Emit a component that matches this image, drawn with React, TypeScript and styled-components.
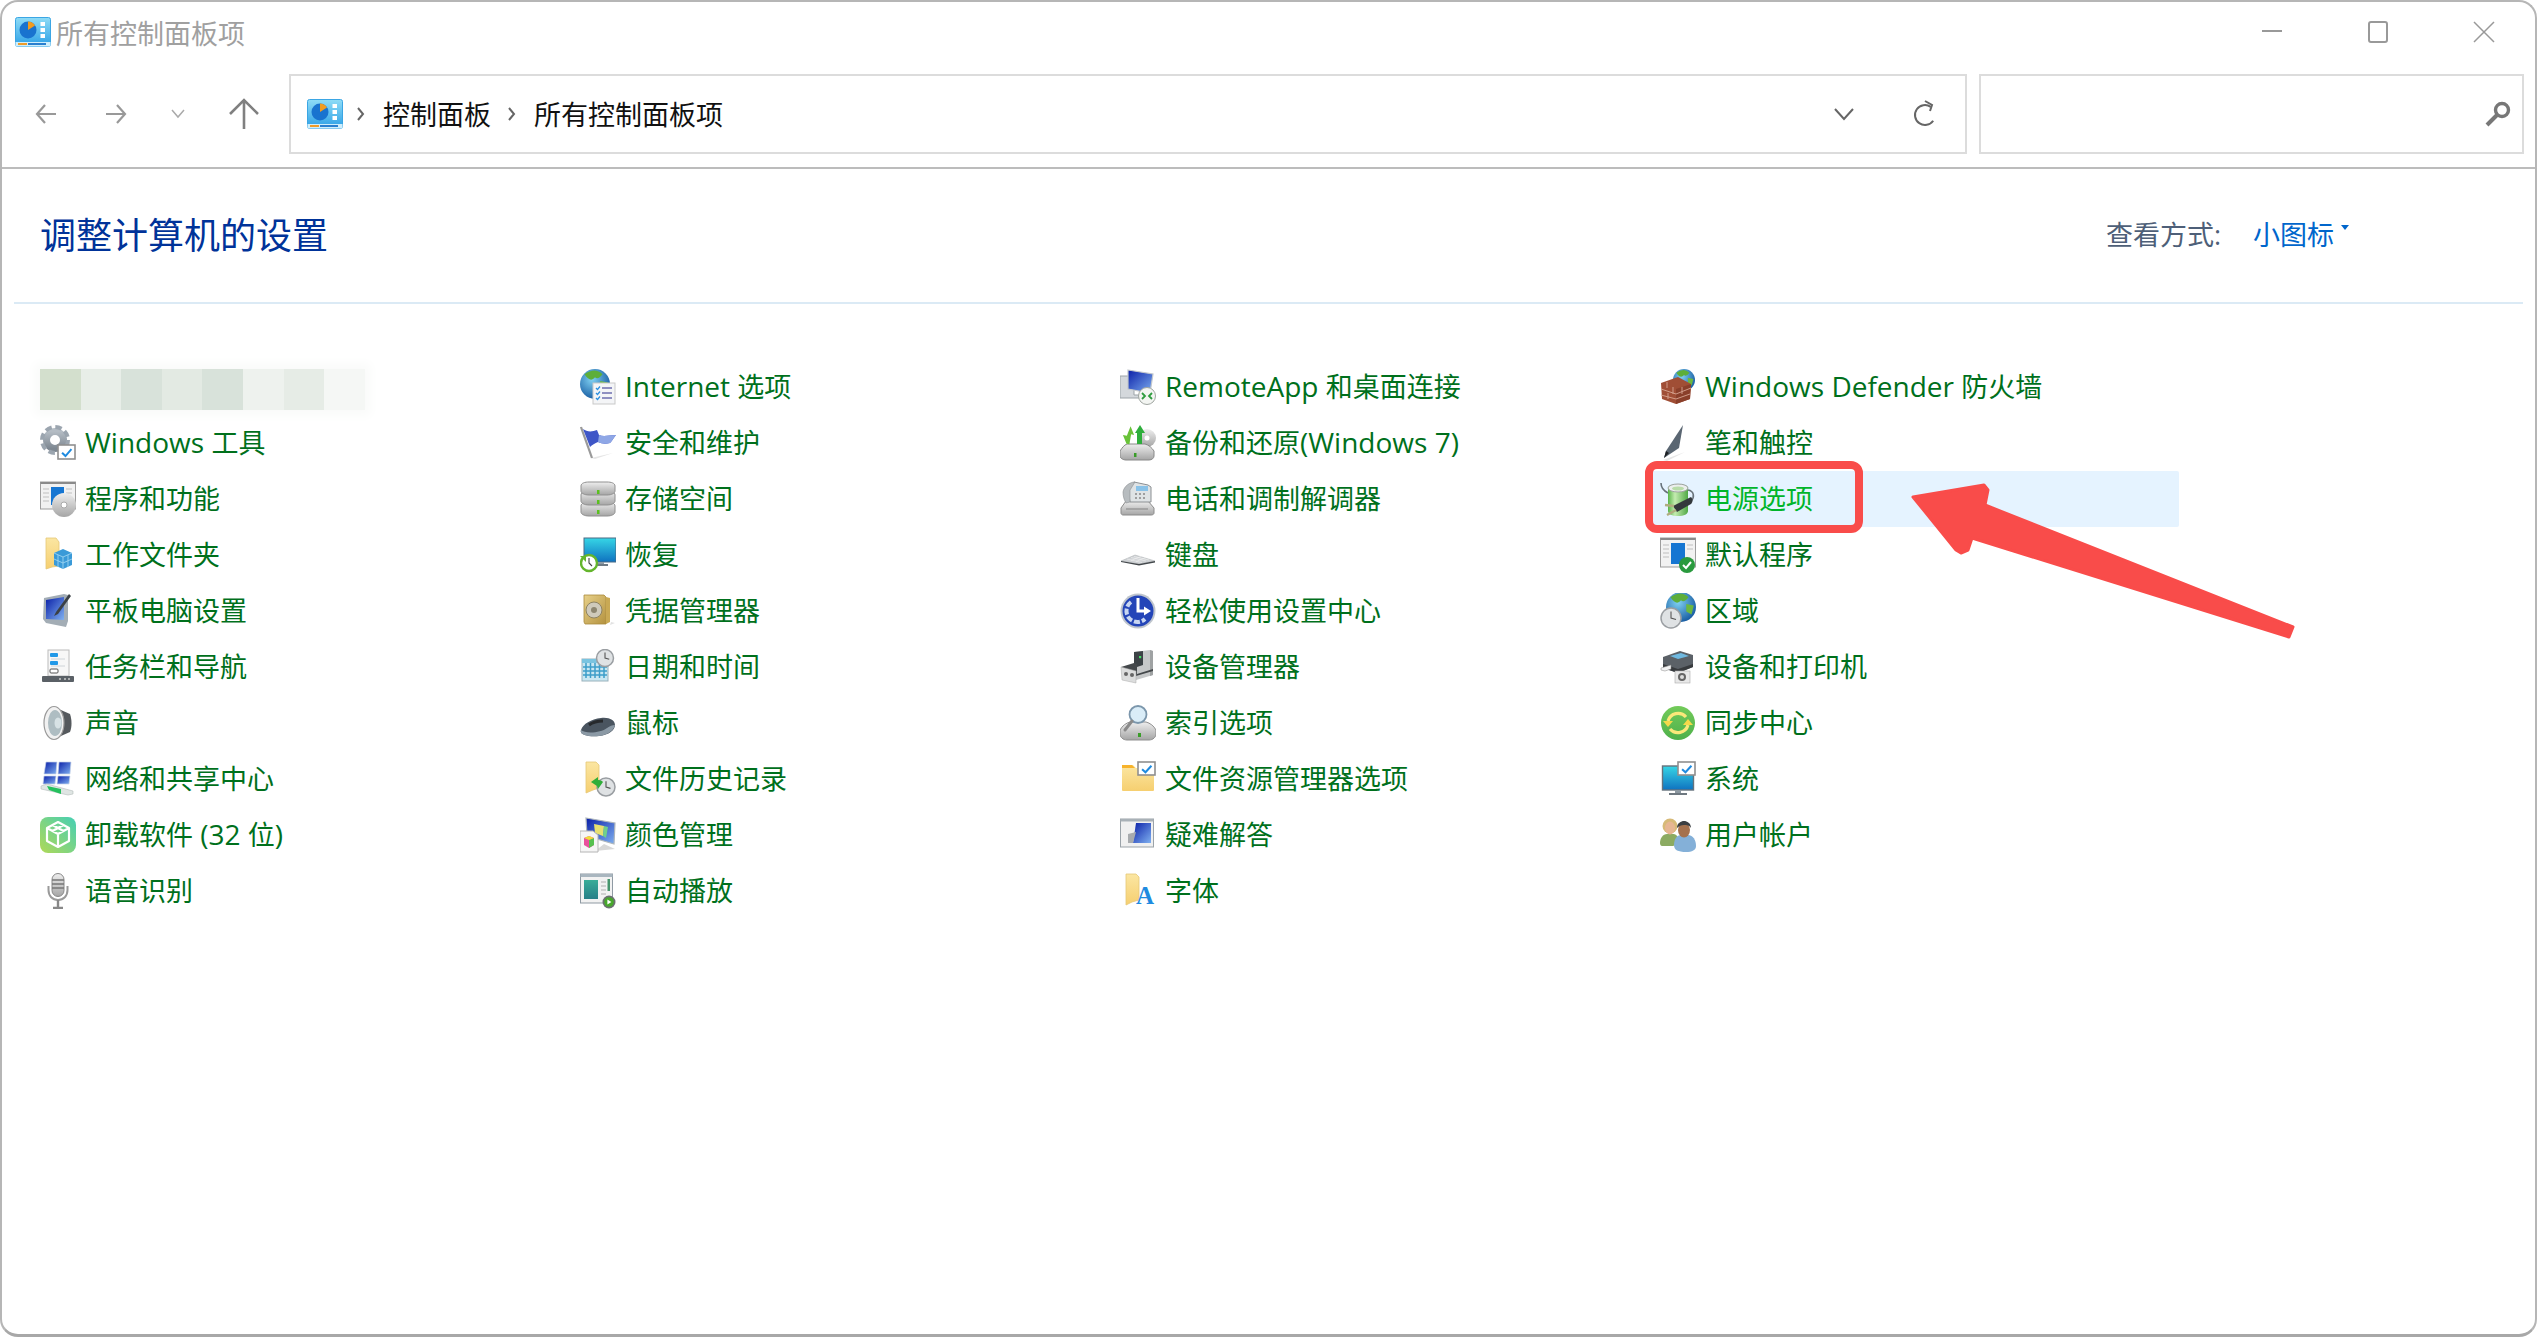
import React from 'react';
import styled, { createGlobalStyle } from 'styled-components';

const FONT = `"Open Sans", "Noto Sans CJK SC", sans-serif`;

const GlobalStyle = createGlobalStyle`
  html, body {
    margin: 0;
    padding: 0;
    background: #fff;
  }
  body {
    font-family: ${FONT};
  }
`;

const Window = styled.div`
  position: relative;
  box-sizing: border-box;
  width: 2537px;
  height: 1337px;
  display: flex;
  flex-direction: column;
  overflow: hidden;
  background: #fff;
  border: 2px solid #b6b6b6;
  border-bottom: 3px solid #a8a8a8;
  border-radius: 18px;
`;

const EdgeMark = styled.div`
  position: absolute;
  left: -2px;
  top: ${({ $top }) => $top}px;
  width: 2px;
  height: ${({ $h }) => $h}px;
  background: #3a3a3a;
`;

const TitleBar = styled.div`
  height: 72px;
  display: flex;
  align-items: center;
  padding: 0 0 12px 13px;
  box-sizing: border-box;
`;

const TitleText = styled.span`
  margin-left: 5px;
  font-size: 27px;
  color: #a0a0a0;
  flex: 1;
`;

const WinButton = styled.div`
  width: 106px;
  display: flex;
  justify-content: center;
  margin-right: ${({ $end }) => ($end ? '-2px' : '0')};
`;

const Toolbar = styled.div`
  height: 95px;
  box-sizing: border-box;
  display: flex;
  align-items: flex-start;
  padding: 0 11px 0 0;
  border-bottom: 2px solid #bcbcbc;
`;

const NavGroup = styled.div`
  width: 287px;
  height: 80px;
  display: flex;
  align-items: center;
`;

const NavButton = styled.div`
  width: ${({ $w }) => $w}px;
  margin-left: ${({ $ml }) => $ml}px;
  display: flex;
  justify-content: center;
`;

const AddressBar = styled.div`
  width: 1678px;
  height: 80px;
  box-sizing: border-box;
  display: flex;
  align-items: center;
  padding: 0 27px 0 16px;
  border: 2px solid #dcdcdc;
  font-size: 27px;
  color: #111;
`;

const Crumb = styled.span`
  margin-left: ${({ $ml }) => $ml}px;
  padding-bottom: 1px;
`;

const Spring = styled.div`
  flex: 1;
`;

const SearchBox = styled.div`
  width: 545px;
  height: 80px;
  margin-left: 12px;
  box-sizing: border-box;
  display: flex;
  align-items: center;
  justify-content: flex-end;
  padding-right: 11px;
  border: 2px solid #dcdcdc;
`;

const Heading = styled.div`
  height: 135px;
  margin: 0 12px;
  padding: 0 26px;
  box-sizing: border-box;
  display: flex;
  align-items: center;
  justify-content: space-between;
  border-bottom: 2px solid #dbeaf5;
`;

const PageTitle = styled.h1`
  margin: 0;
  padding-bottom: 4px;
  font-size: 36px;
  font-weight: 400;
  color: #003399;
`;

const ViewMode = styled.div`
  display: flex;
  align-items: center;
  padding-bottom: 4px;
  font-size: 27px;
  color: #4e5f78;
  margin-right: 148px;
`;

const ViewLink = styled.span`
  margin-left: 32px;
  color: #0066cc;
`;

const Caret = styled.i`
  width: 0;
  height: 0;
  margin: -8px 0 0 7px;
  border: 4px solid transparent;
  border-top: 5px solid #0066cc;
`;

const Grid = styled.div`
  margin-top: 55px;
  margin-left: 29px;
  display: grid;
  grid-auto-flow: column;
  grid-template-rows: repeat(10, 56px);
  grid-template-columns: repeat(4, 540px);
`;

const Row = styled.div`
  position: relative;
  width: 528px;
  height: 56px;
  box-sizing: border-box;
  display: flex;
  align-items: center;
  gap: 9px;
  padding-left: 9px;
  font-size: 27px;
  white-space: nowrap;
  color: ${({ $active }) => ($active ? '#00b52a' : '#00701c')};
  background: ${({ $active }) => ($active ? '#e5f3ff' : 'transparent')};
  border-radius: 2px;
`;

const RowLabel = styled.span`
  padding-bottom: 3px;
`;

const Latin = styled.span`
  font-size: 28px;
`;

const Icon = styled.svg`
  flex: none;
  display: block;
  width: ${({ $w }) => $w || 36}px;
  height: ${({ $h }) => $h || 36}px;
  margin-left: ${({ $ml }) => $ml || 0}px;
`;

const HiddenDefs = styled.svg`
  position: absolute;
  width: 0;
  height: 0;
`;

const BlurredBar = styled.div`
  display: flex;
  justify-self: start;
  margin: 10px 0 5px 9px;
  box-shadow: 0 0 10px 6px #fafbfa;
`;

const BlurBlock = styled.div`
  width: 40.6px;
  height: 41px;
  background: ${({ $c }) => $c};
`;

const RedBox = styled.div`
  position: absolute;
  left: -6px;
  top: -10px;
  width: 218px;
  height: 72px;
  box-sizing: border-box;
  border: 8px solid #f94c4a;
  border-radius: 12px;
`;

const Arrow = styled.svg`
  position: absolute;
  left: 1896px;
  top: 468px;
  width: 410px;
  height: 180px;
`;

const Defs = () => (
  <HiddenDefs>
    <defs>
      <linearGradient id="sky" x1="0" y1="0" x2="0" y2="1">
        <stop offset="0" stopColor="#36d6e6" />
        <stop offset="1" stopColor="#0f72c0" />
      </linearGradient>
      <linearGradient id="panel" x1="0" y1="0" x2="0" y2="1">
        <stop offset="0" stopColor="#8fdcf6" />
        <stop offset="1" stopColor="#2b9fe6" />
      </linearGradient>
      <linearGradient id="grey" x1="0" y1="0" x2="0" y2="1">
        <stop offset="0" stopColor="#b4bcc4" />
        <stop offset="1" stopColor="#7e8892" />
      </linearGradient>
      <linearGradient id="silver" x1="0" y1="0" x2="0" y2="1">
        <stop offset="0" stopColor="#eeeeee" />
        <stop offset="1" stopColor="#a5a5a5" />
      </linearGradient>
      <linearGradient id="folder" x1="0" y1="0" x2="0" y2="1">
        <stop offset="0" stopColor="#fbe6a2" />
        <stop offset="1" stopColor="#f6cf70" />
      </linearGradient>
      <linearGradient id="royal" x1="0" y1="0" x2="1" y2="1">
        <stop offset="0" stopColor="#0a1fa8" />
        <stop offset="1" stopColor="#7fb0f0" />
      </linearGradient>
      <linearGradient id="mint" x1="1" y1="0" x2="0" y2="1">
        <stop offset="0" stopColor="#45cfb4" />
        <stop offset="1" stopColor="#b0d957" />
      </linearGradient>
      <linearGradient id="gold" x1="0" y1="0" x2="1" y2="1">
        <stop offset="0" stopColor="#e8d18a" />
        <stop offset="1" stopColor="#b4923f" />
      </linearGradient>
      <linearGradient id="grass" x1="0" y1="0" x2="0" y2="1">
        <stop offset="0" stopColor="#73cb5a" />
        <stop offset="1" stopColor="#4eb04a" />
      </linearGradient>
      <linearGradient id="battery" x1="0" y1="0" x2="1" y2="0">
        <stop offset="0" stopColor="#58b548" />
        <stop offset="0.35" stopColor="#c4ecb0" />
        <stop offset="1" stopColor="#4fa845" />
      </linearGradient>
      <radialGradient id="earth" cx="0.4" cy="0.35" r="0.7">
        <stop offset="0" stopColor="#7fd0f2" />
        <stop offset="1" stopColor="#14589f" />
      </radialGradient>
    </defs>
  </HiddenDefs>
);

const Globe = ({ cx, cy, r }: { cx: number; cy: number; r: number }) => (
  <g>
    <circle cx={cx} cy={cy} r={r} fill="url(#earth)" />
    <path
      d={`M${cx - r * 0.7} ${cy - r * 0.65}q${r * 0.7} -${r * 0.5} ${r * 1.2} 0q-${r * 0.3} ${r * 0.4} -${r * 0.5} ${r * 0.2}q-${r * 0.3} ${r * 0.4} -${r * 0.7} -${r * 0.2}z`}
      fill="#5dae3a"
    />
    <path d={`M${cx + r * 0.35} ${cy - r * 0.2}l${r * 0.5} ${r * 0.1}l-${r * 0.15} ${r * 0.6}l-${r * 0.35} -${r * 0.2}z`} fill="#6cb83f" />
  </g>
);

const Clock = ({ cx, cy, r }: { cx: number; cy: number; r: number }) => (
  <g>
    <circle cx={cx} cy={cy} r={r} fill="#dfe2e4" stroke="#9a9ea2" strokeWidth="1.5" />
    <path d={`M${cx} ${cy - r * 0.65}V${cy}L${cx + r * 0.5} ${cy + r * 0.15}`} fill="none" stroke="#555" strokeWidth="1.1" />
  </g>
);

const CheckBox = ({ x, y, w, h }: { x: number; y: number; w: number; h: number }) => (
  <g>
    <rect x={x} y={y} width={w} height={h} fill="#fff" stroke="#8f8f8f" strokeWidth="1.6" />
    <path
      d={`M${x + w * 0.24} ${y + h * 0.55}l${w * 0.2} ${h * 0.24}l${w * 0.35} -${h * 0.5}`}
      fill="none"
      stroke="#1f8be0"
      strokeWidth="2"
    />
  </g>
);

const PanelIcon = () => (
  <Icon $w={36} $h={30} viewBox="0 0 36 30">
    <rect x="0.5" y="0.5" width="35" height="29" rx="2" fill="url(#panel)" stroke="#3ba6e4" />
    <rect x="0.5" y="25" width="35" height="4.5" fill="#cfeefb" />
    <circle cx="13" cy="13" r="8.5" fill="#1973cf" />
    <path d="M13 13V4.5a8.5 8.5 0 0 1 7 4z" fill="#f29c1f" />
    <path d="M3 27h9" stroke="#ef9c2a" strokeWidth="2" />
    <path d="M13 27h18" stroke="#2a7fcf" strokeWidth="2" />
    <rect x="25.5" y="5" width="4.5" height="4" fill="#fff" />
    <rect x="25.5" y="11" width="4.5" height="4" fill="#fff" />
    <rect x="25.5" y="17" width="4.5" height="4" fill="#fff" />
  </Icon>
);

const Chevron = ({ ml }: { ml: number }) => (
  <Icon $w={10} $h={16} $ml={ml} viewBox="0 0 10 16">
    <path d="M2 2l5 6-5 6" fill="none" stroke="#666" strokeWidth="2" />
  </Icon>
);

const icons: Record<string, React.ReactNode> = {
  tools: (
    <>
      <circle cx="15" cy="15" r="8.5" fill="none" stroke="url(#grey)" strokeWidth="7" />
      <circle cx="15" cy="15" r="13" fill="none" stroke="#9ba5af" strokeWidth="4" strokeDasharray="6.5 3.7" />
      <CheckBox x={18} y={20} w={17} h={14} />
    </>
  ),
  programs: (
    <>
      <rect x="0.5" y="1" width="35" height="27" fill="#f1f1f1" stroke="#9d9d9d" />
      <rect x="0.5" y="1" width="35" height="2" fill="#8a8a8a" />
      <path d="M3 8h6M3 12h6M3 16h6M3 20h6M26 8h6M26 12h6" stroke="#cfcfcf" strokeWidth="1.6" />
      <rect x="11" y="6" width="13" height="18" fill="#1676d2" />
      <circle cx="24" cy="24" r="12" fill="url(#silver)" />
      <circle cx="24" cy="24" r="3" fill="#fff" stroke="#aaa" />
    </>
  ),
  workfolder: (
    <>
      <path d="M6 1h10l3 4h0v24l-7 1-6 2z" fill="url(#folder)" stroke="#e6c877" strokeWidth="0.8" />
      <path d="M23 12l9 4v12l-9 4-9-4V16z" fill="#3a9ad8" />
      <path d="M14 16l9 4 9-4M23 20v12M18 18v12M28 18v12M14 22l9 4 9-4" fill="none" stroke="#9ad4f2" strokeWidth="0.9" />
    </>
  ),
  tablet: (
    <>
      <path d="M4 5L24 1l4 1v26l-2 6-20-4-3-4z" fill="#a3adb5" />
      <path d="M6 7l18-3v23L6 26z" fill="url(#royal)" />
      <path d="M29 1L16 19l-2 4 4-2L31 3z" fill="#3b4045" />
    </>
  ),
  taskbar: (
    <>
      <rect x="8" y="1" width="21" height="26" fill="#f7f7f7" stroke="#bcbcbc" />
      <path d="M11 10h14M11 17h14" stroke="#cfd4d8" />
      <rect x="10" y="4" width="8" height="4" rx="1" fill="#2299e8" />
      <rect x="10" y="12" width="8" height="4" rx="1" fill="#2299e8" />
      <rect x="10" y="20" width="8" height="4" rx="1" fill="#fff" stroke="#555" />
      <rect x="2" y="27" width="32" height="6" rx="1" fill="#5a6066" />
      <path d="M19 30h2M24 30h2M28 30h2" stroke="#c8c8c8" strokeWidth="1.6" />
    </>
  ),
  sound: (
    <>
      <path d="M14 2l16 7c2 6 2 13 0 18L14 34z" fill="#55595d" />
      <ellipse cx="14" cy="18" rx="10" ry="16.5" fill="#f1f1f1" stroke="#9a9a9a" strokeWidth="1.2" />
      <ellipse cx="15" cy="18" rx="7" ry="13" fill="#aebdc2" />
      <ellipse cx="18" cy="18" rx="3.5" ry="5.5" fill="#d7e2e5" />
    </>
  ),
  network: (
    <>
      <path d="M6 1h11l-1 12H4z" fill="url(#royal)" stroke="#c9d4e8" strokeWidth="0.7" />
      <path d="M19 1h12l-1 12H18z" fill="url(#royal)" stroke="#c9d4e8" strokeWidth="0.7" />
      <path d="M4 15h12l-1 8H3z" fill="url(#royal)" stroke="#c9d4e8" strokeWidth="0.7" />
      <path d="M18 15h12l-1 8H17z" fill="url(#royal)" stroke="#c9d4e8" strokeWidth="0.7" />
      <path d="M1 25l6-2 26 7v3l-5 1L1 28z" fill="#dfe5e3" stroke="#b3bcba" strokeWidth="0.6" />
      <path d="M7 25l14 3v5L9 29z" fill="#25c05e" />
    </>
  ),
  uninstall: (
    <>
      <rect width="36" height="36" rx="8" fill="url(#mint)" />
      <path
        d="M18 5l11 6v13l-11 6-11-6V11zM7 11l11 6 11-6M18 17v13M12.5 8l11 6M23.5 8l-11 6"
        fill="none"
        stroke="#fff"
        strokeWidth="2.2"
        strokeLinejoin="round"
      />
    </>
  ),
  mic: (
    <>
      <rect x="12" y="0.5" width="12" height="23" rx="6" fill="url(#silver)" stroke="#888" />
      <path d="M12 7h12M12 11h12M12 15h12" stroke="#777" strokeWidth="1.3" />
      <path d="M8.5 13v4c0 6 4 10 9.5 10s9.5-4 9.5-10v-4" fill="none" stroke="#9a9a9a" strokeWidth="2" />
      <path d="M18 27v7M13 35h10" stroke="#888" strokeWidth="2.4" />
    </>
  ),
  internet: (
    <>
      <Globe cx={15} cy={15} r={15} />
      <rect x="13" y="14" width="22" height="21" fill="#f4f5f7" stroke="#c9c9c9" />
      <path d="M22 19h10M22 24h10M22 29h10" stroke="#6d6fb0" strokeWidth="1.3" />
      <path d="M16 19l1.5 1.5 2.5-3M16 24l1.5 1.5 2.5-3M16 29l1.5 1.5 2.5-3" fill="none" stroke="#2c8fe0" strokeWidth="1.3" />
    </>
  ),
  flag: (
    <>
      <path d="M11 33l22-5-18 6z" fill="#e5e5e5" />
      <path d="M1 2l11 31" stroke="#9a9a9a" strokeWidth="2.2" />
      <path d="M3 4c4 3 9 3 14 1l2 5c5 2 10 0 17 0-3 4-5 7-6 8-4 1-8 1-12-1-3 1-6 3-8 5z" fill="#3f56c7" />
      <path d="M19 10c5 2 10 0 17 0-3 4-5 7-6 8-4 1-8 1-12-1z" fill="#8fa7e6" />
    </>
  ),
  storage: (
    <>
      <path d="M1 25c0-3 4-4 8-4h18c4 0 8 1 8 4v6c0 2-3 4-8 4H9c-5 0-8-2-8-4z" fill="url(#silver)" stroke="#909090" />
      <path d="M1 14c0-3 4-4 8-4h18c4 0 8 1 8 4v6c0 2-3 4-8 4H9c-5 0-8-2-8-4z" fill="url(#silver)" stroke="#909090" />
      <path d="M1 5c0-3 4-4 8-4h18c4 0 8 1 8 4v5c0 2-3 4-8 4H9c-5 0-8-2-8-4z" fill="url(#silver)" stroke="#909090" />
      <rect x="17" y="9" width="2.5" height="4" fill="#5bc01f" />
      <rect x="17" y="19" width="2.5" height="4" fill="#5bc01f" />
      <rect x="17" y="29" width="2.5" height="4" fill="#5bc01f" />
    </>
  ),
  recovery: (
    <>
      <rect x="4" y="1" width="32" height="24" fill="url(#sky)" stroke="#4a6a84" />
      <rect x="18" y="25" width="6" height="3" fill="#8c9aa5" />
      <rect x="14" y="27" width="14" height="2" fill="#6e7a84" />
      <circle cx="9" cy="26" r="8" fill="#fff" stroke="#64b52c" strokeWidth="2.4" />
      <path d="M9 21v5l3 3" fill="none" stroke="#444" strokeWidth="1.1" />
      <path d="M0 19h6v6z" fill="#64b52c" />
    </>
  ),
  safe: (
    <>
      <path d="M4 2h20l2 2v27H5l-1-2z" fill="url(#gold)" stroke="#a98a3c" strokeWidth="0.8" />
      <path d="M26 4l4 1v24l-4 2z" fill="#c9a954" />
      <circle cx="14" cy="17" r="8" fill="#cfcabb" stroke="#8e8362" />
      <circle cx="14" cy="17" r="3" fill="#8d8670" />
      <path d="M31 29l4 1-5 2z" fill="#e2e2e2" />
    </>
  ),
  date: (
    <>
      <rect x="2" y="10" width="26" height="22" fill="#c8e7f2" stroke="#9ab1bb" />
      <rect x="2" y="10" width="26" height="4" fill="#7ac4e0" />
      <path d="M6 14v15M10.5 14v15M15 14v15M19.5 14v15M24 14v15M3 18h24M3 22h24M3 26h24" stroke="#3d9ec9" strokeWidth="1.5" />
      <Clock cx={25} cy={9} r={8.5} />
    </>
  ),
  mouse: (
    <>
      <path d="M1 25c2-6 10-11 20-12 8-1 14 2 14 7s-6 10-16 11c-10 1-20-1-18-6z" fill="#4a5560" />
      <path d="M1 25c4 4 20 3 26-2 3-2 5-3 8-3-1 5-7 10-16 11-10 1-20-1-18-6z" fill="#8b99a5" />
      <path d="M9 20c4-3 9-4 14-4" stroke="#26292c" strokeWidth="3" fill="none" />
    </>
  ),
  history: (
    <>
      <path d="M6 1h10l3 3v23l-6 2-7 3z" fill="url(#folder)" stroke="#e6c877" strokeWidth="0.8" />
      <Clock cx={26} cy={26} r={9} />
      <path d="M11 21l7-5v3c3 0 4 1 5 2l-5 7-1-3z" fill="#2fae39" />
    </>
  ),
  color: (
    <>
      <path d="M6 1l29 5-1 21-27-8z" fill="url(#royal)" stroke="#aeb6bd" strokeWidth="1.2" />
      <path d="M14 7l10 2-1 10-8-3z" fill="#e8e070" />
      <path d="M24 9l4 1-2 11-3-2z" fill="#6fd08b" />
      <path d="M24 27l11 5-20 2z" fill="#d8d8d8" />
      <path d="M0 14h13l5 4v17H0z" fill="#f5f5f5" stroke="#b4b4b4" />
      <path d="M4 21l5-2 5 2v7l-5 3-5-3z" fill="#e94f9d" />
      <path d="M9 23l5-2v7l-5 3z" fill="#56c14f" />
      <path d="M4 21l5-2 5 2-5 2z" fill="#f0dc39" />
    </>
  ),
  autoplay: (
    <>
      <rect x="0.5" y="1" width="32" height="29" fill="#f2f2f2" stroke="#8f9aa3" />
      <rect x="0.5" y="1" width="32" height="3" fill="#a9b6bf" />
      <rect x="4" y="7" width="14" height="19" fill="url(#sky)" />
      <rect x="4" y="7" width="14" height="19" fill="#3d8a5a" fillOpacity="0.55" />
      <path d="M21 9h5M21 13h5M21 17h5M21 21h5" stroke="#c6c6c6" strokeWidth="1.5" />
      <rect x="27.5" y="6" width="2.5" height="12" fill="#47966e" />
      <circle cx="29" cy="29" r="6.5" fill="#6c6f72" />
      <circle cx="29" cy="29" r="4.8" fill="#47a82b" />
      <path d="M27.4 26.5l4 2.5-4 2.5z" fill="#fff" />
    </>
  ),
  remote: (
    <>
      <path d="M0 7h14v19h12v3H0z" fill="#d4d8dc" stroke="#9ca3a8" />
      <path d="M8 1l25 4-3 19-22-4z" fill="url(#royal)" stroke="#c4c8cc" strokeWidth="1.2" />
      <circle cx="27" cy="27" r="8.5" fill="#f3f5f2" stroke="#9fa5a0" />
      <path d="M22 24l3 3-3 3M32 24l-3 3 3 3" fill="none" stroke="#2f9c3f" strokeWidth="1.8" />
    </>
  ),
  backup: (
    <>
      <circle cx="27" cy="13" r="9" fill="url(#silver)" />
      <circle cx="27" cy="13" r="2.5" fill="#fff" />
      <path d="M0 26c2-3 4-6 7-7h18c4 1 7 4 9 7v5c0 2-2 4-5 4H6c-3 0-6-2-6-4z" fill="url(#silver)" stroke="#888" />
      <rect x="14" y="28" width="2.5" height="4" fill="#3a9d29" />
      <path d="M9 1l5 8-3 0v10H8L3 11h4z" fill="#69c238" transform="rotate(10 9 10)" />
      <path d="M20 0l5 8h-3v11h-5V8h-2z" fill="#2fae3c" />
    </>
  ),
  phone: (
    <>
      <path d="M6 20l-5 7v5c0 1 1 2 2 2h28c2 0 3-1 3-2v-5l-6-7z" fill="url(#silver)" stroke="#8b8b8b" />
      <path d="M8 8l6-7 14 3 3 2v15H10z" fill="#dfe3e5" stroke="#8b8f92" />
      <rect x="16" y="5" width="12" height="5" fill="#89c2e8" />
      <path d="M15 13h2M19 13h2M23 13h2M15 17h2M19 17h2M23 17h2" stroke="#888" strokeWidth="1.5" />
      <path d="M3 11c0 4 1 8 3 11l4-1V9l5-8C10 1 4 5 3 11z" fill="#b7bcbf" stroke="#8b8f92" strokeWidth="0.6" />
      <path d="M6 28h22" stroke="#9a9a9a" strokeWidth="1.5" />
    </>
  ),
  keyboard: (
    <>
      <path d="M1 24l14-6 20 6-16 3z" fill="#cfd2d5" stroke="#a8acaf" strokeWidth="0.5" />
      <path d="M1 24l18 3 16-3v1.4l-16 3-18-3.4z" fill="#43484c" />
      <path d="M7 22l15 3.5M11 20.500l15 3.500M14 19.500l15 3.500M11 23.500l10-4M16 24.500l10-4" stroke="#f1f1f1" strokeWidth="0.6" />
    </>
  ),
  ease: (
    <>
      <circle cx="18" cy="18" r="17.5" fill="#bfc5cd" />
      <circle cx="18" cy="18" r="15.5" fill="#2445b8" />
      <path d="M11 9a11 11 0 0 0 -2 16a11 11 0 0 0 16 1" stroke="#c8d6f2" strokeWidth="4" strokeDasharray="6 2" fill="none" />
      <path d="M18 5v13h8" stroke="#fff" strokeWidth="3" fill="none" />
      <path d="M24 13.500l7 4.500-7 4.500z" fill="#fff" />
    </>
  ),
  device: (
    <>
      <path d="M14 3l16-2 3 1v24l-17 5z" fill="#c6c8c9" />
      <path d="M30 1l3 1v24l-3 1z" fill="#9fa2a3" />
      <path d="M14 3l9-1v14l-9 3z" fill="#3c4246" />
      <rect x="19" y="7" width="2.200" height="2.200" fill="#44dd66" />
      <path d="M1 18l13-4 3 1v10l16-5v2l-17 5z" fill="#44484b" />
      <path d="M1 18l15 4v12l-14-3z" fill="#dcdddd" stroke="#aaa" strokeWidth="0.5" />
      <circle cx="6" cy="25" r="2" fill="#666" />
      <circle cx="12" cy="26" r="2" fill="#666" />
    </>
  ),
  index: (
    <>
      <path d="M0 25c2-4 6-7 10-8h16c4 1 8 4 10 8v4c0 3-3 6-7 6H7c-4 0-7-3-7-6z" fill="url(#silver)" stroke="#8f8f8f" />
      <rect x="18" y="28" width="3" height="4" fill="#3a9d29" />
      <circle cx="18" cy="9.500" r="8.500" fill="#d6ebf7" fillOpacity="0.9" stroke="#7c97ac" strokeWidth="1.800" />
      <path d="M12 16l-7 9" stroke="#8a8a8a" strokeWidth="3" strokeLinecap="round" />
    </>
  ),
  explorer: (
    <>
      <path d="M2 4h11l3 3h18v22a1 1 0 0 1-1 1H3a1 1 0 0 1-1-1z" fill="url(#folder)" />
      <path d="M2 4h10l3 3H2z" fill="#f7b32b" />
      <CheckBox x={18} y={1} w={17} h={13} />
    </>
  ),
  trouble: (
    <>
      <rect x="0.5" y="2" width="33" height="28" fill="#f0f0f0" stroke="#9ba3a9" />
      <rect x="0.5" y="2" width="33" height="2.5" fill="#a9b1b7" />
      <path d="M16 6l15 0v20H13z" fill="url(#royal)" />
      <path d="M8 17l8-2-3 11H8z" fill="#a8abae" />
    </>
  ),
  fonts: (
    <>
      <path d="M6 1h10l3 3v23l-7 2-6 3z" fill="url(#folder)" stroke="#e6c877" strokeWidth="0.8" />
      <text x="25" y="31" textAnchor="middle" fontFamily="Liberation Serif, serif" fontWeight="700" fontSize="25" fill="#1f8be0">
        A
      </text>
    </>
  ),
  firewall: (
    <>
      <Globe cx={24} cy={11} r={11} />
      <path d="M1 14l17-6 13 7-1 15-14 5-14-5z" fill="#a04e35" />
      <path d="M16 20l15-5-1 15-14 5z" fill="#8a3f2a" />
      <path d="M1 20l15 5 15-6M1 26l15 4 14-5M7 13v6M13 18v7M22 18v7M8 24v6" fill="none" stroke="#d7a592" strokeWidth="0.9" />
    </>
  ),
  pen: (
    <>
      <path d="M3 35l22-8-18 9z" fill="#e6e6e6" />
      <path d="M4 33l2-7L23 0l-4 23z" fill="#5a6672" />
      <path d="M4 33l2-7 3 2z" fill="#1c1f22" />
    </>
  ),
  power: (
    <>
      <path d="M1 2c0 5 3 8 7 10M28 9c6 1 7 7 3 11" fill="none" stroke="#68727a" strokeWidth="1.6" />
      <path d="M8 7c0-2 4-4 10-4s10 2 10 4v23c0 3-4 5-10 5s-10-2-10-5z" fill="url(#battery)" />
      <ellipse cx="18" cy="7" rx="10" ry="4" fill="#eceeed" stroke="#9fa3a1" />
      <ellipse cx="18" cy="7.500" rx="6" ry="2" fill="#b8dca8" />
      <path d="M31 16c2 2 2 5 0 7l-14 8-4-6z" fill="#33383c" />
      <path d="M14 25L5 24M16 29l-9 5" stroke="#b0ad80" strokeWidth="2.4" />
    </>
  ),
  defaults: (
    <>
      <rect x="0.5" y="1" width="35" height="29" fill="#f2f2f2" stroke="#9d9d9d" />
      <rect x="0.5" y="1" width="35" height="2" fill="#8a8a8a" />
      <path d="M3 8h6M3 12h6M3 16h6M3 20h6M27 8h6M27 12h6" stroke="#cfcfcf" strokeWidth="1.6" />
      <rect x="11" y="6" width="14" height="21" fill="#1676d2" />
      <circle cx="27" cy="28" r="8" fill="#2a9a3e" />
      <path d="M23 28l3 3 5-6" fill="none" stroke="#fff" strokeWidth="2" />
    </>
  ),
  region: (
    <>
      <Globe cx={21} cy={14} r={15} />
      <Clock cx={11} cy={25} r={10} />
    </>
  ),
  printer: (
    <>
      <path d="M3 8l17-6 13 4v12l-15 6-15-5z" fill="#5b6167" />
      <path d="M10 7l11-3 8 3-11 3z" fill="#6fb9e0" />
      <path d="M3 15l15 5 15-5v3l-15 6-15-5z" fill="#383b3e" />
      <path d="M1 19l10-3v4l-6 2-4-1z" fill="#f2f2f2" stroke="#888" strokeWidth="0.5" />
      <rect x="15" y="22" width="15" height="12" fill="#e8e8e8" stroke="#aaa" strokeWidth="0.6" />
      <circle cx="22" cy="28" r="4" fill="#666" />
      <circle cx="22" cy="28" r="2" fill="#ddd" />
    </>
  ),
  sync: (
    <>
      <circle cx="18" cy="18" r="17" fill="url(#grass)" />
      <path d="M8 16a10.5 10.5 0 0 1 18-4" fill="none" stroke="#fbe87a" strokeWidth="3.2" />
      <path d="M28 20a10.5 10.5 0 0 1-18 4" fill="none" stroke="#fbe87a" strokeWidth="3.2" />
      <path d="M3 16h10l-5 6z" fill="#f4d94a" />
      <path d="M23 20h10l-5-6z" fill="#f4d94a" />
    </>
  ),
  system: (
    <>
      <rect x="2.5" y="5" width="31" height="24" fill="url(#sky)" stroke="#66727c" strokeWidth="1.4" />
      <rect x="15" y="29" width="6" height="3" fill="#8d99a2" />
      <rect x="9" y="32" width="18" height="2" fill="#6e7880" />
      <CheckBox x={18} y={1} w={17} h={13} />
    </>
  ),
  users: (
    <>
      <path d="M0 26c0-5 3-9 7-9h6c3 0 5 2 5 6v4l-5 2H2c-1 0-2-1-2-3z" fill="#8cab62" />
      <circle cx="10" cy="9" r="7.5" fill="#d7ba78" />
      <ellipse cx="10" cy="11" rx="5" ry="6.5" fill="#e6b693" />
      <path d="M14 28c0-6 3-10 7-10h7c5 0 8 5 8 11 0 4-4 6-10 6-8 0-12-2-12-7z" fill="#84b0d8" />
      <ellipse cx="24" cy="13" rx="6" ry="7.5" fill="#a5714d" />
      <path d="M17 11c0-5 4-7 7-7s7 2 7 7c-2-3-4-3-7-3s-5 1-7 3z" fill="#3c3f42" />
    </>
  ),
};

type Item = { label: string; icon?: string };

const items: Item[] = [
  { label: '' },
  { label: 'Windows 工具', icon: 'tools' },
  { label: '程序和功能', icon: 'programs' },
  { label: '工作文件夹', icon: 'workfolder' },
  { label: '平板电脑设置', icon: 'tablet' },
  { label: '任务栏和导航', icon: 'taskbar' },
  { label: '声音', icon: 'sound' },
  { label: '网络和共享中心', icon: 'network' },
  { label: '卸载软件 (32 位)', icon: 'uninstall' },
  { label: '语音识别', icon: 'mic' },
  { label: 'Internet 选项', icon: 'internet' },
  { label: '安全和维护', icon: 'flag' },
  { label: '存储空间', icon: 'storage' },
  { label: '恢复', icon: 'recovery' },
  { label: '凭据管理器', icon: 'safe' },
  { label: '日期和时间', icon: 'date' },
  { label: '鼠标', icon: 'mouse' },
  { label: '文件历史记录', icon: 'history' },
  { label: '颜色管理', icon: 'color' },
  { label: '自动播放', icon: 'autoplay' },
  { label: 'RemoteApp 和桌面连接', icon: 'remote' },
  { label: '备份和还原(Windows 7)', icon: 'backup' },
  { label: '电话和调制解调器', icon: 'phone' },
  { label: '键盘', icon: 'keyboard' },
  { label: '轻松使用设置中心', icon: 'ease' },
  { label: '设备管理器', icon: 'device' },
  { label: '索引选项', icon: 'index' },
  { label: '文件资源管理器选项', icon: 'explorer' },
  { label: '疑难解答', icon: 'trouble' },
  { label: '字体', icon: 'fonts' },
  { label: 'Windows Defender 防火墙', icon: 'firewall' },
  { label: '笔和触控', icon: 'pen' },
  { label: '电源选项', icon: 'power' },
  { label: '默认程序', icon: 'defaults' },
  { label: '区域', icon: 'region' },
  { label: '设备和打印机', icon: 'printer' },
  { label: '同步中心', icon: 'sync' },
  { label: '系统', icon: 'system' },
  { label: '用户帐户', icon: 'users' },
];

const blurColors = ['#d3dfcd', '#e8eee8', '#d8e2da', '#e3eae3', '#d8e2da', '#eef2ee', '#e6ece6', '#f5f7f5'];

// latin runs sit a touch larger than the CJK around them
const Label = ({ text }: { text: string }) => (
  <RowLabel>
    {text.split(/([\x20-\x7e]+)/).map((part, i) =>
      i % 2 ? <Latin key={i}>{part}</Latin> : part,
    )}
  </RowLabel>
);

export default function App() {
  return (
    <>
      <GlobalStyle />
      <Defs />
      <Window>
        <EdgeMark $top={866} $h={42} />
        <EdgeMark $top={1267} $h={8} />
        <EdgeMark $top={1280} $h={13} />
        <TitleBar>
          <PanelIcon />
          <TitleText>所有控制面板项</TitleText>
          <WinButton>
            <Icon $w={22} $h={22} viewBox="0 0 22 22">
              <path d="M1 10h20" stroke="#999" strokeWidth="2" />
            </Icon>
          </WinButton>
          <WinButton>
            <Icon $w={22} $h={22} viewBox="0 0 22 22">
              <rect x="2" y="1" width="18" height="20" rx="2" fill="none" stroke="#999" strokeWidth="2" />
            </Icon>
          </WinButton>
          <WinButton $end>
            <Icon $w={22} $h={22} viewBox="0 0 22 22">
              <path d="M1 1l20 20M21 1L1 21" stroke="#999" strokeWidth="1.5" />
            </Icon>
          </WinButton>
        </TitleBar>
        <Toolbar>
          <NavGroup>
            <NavButton $w={24} $ml={32}>
              <Icon $w={22} $h={22} viewBox="0 0 22 22">
                <path d="M21 11H2M10 2l-8 9 8 9" fill="none" stroke="#999" strokeWidth="2.2" />
              </Icon>
            </NavButton>
            <NavButton $w={24} $ml={46}>
              <Icon $w={22} $h={22} viewBox="0 0 22 22">
                <path d="M1 11h19M12 2l8 9-8 9" fill="none" stroke="#999" strokeWidth="2.2" />
              </Icon>
            </NavButton>
            <NavButton $w={16} $ml={42}>
              <Icon $w={14} $h={10} viewBox="0 0 14 10">
                <path d="M1 1l6 7 6-7" fill="none" stroke="#aaa" strokeWidth="1.5" />
              </Icon>
            </NavButton>
            <NavButton $w={32} $ml={42}>
              <Icon $w={32} $h={32} viewBox="0 0 32 32">
                <path d="M16 31V3M2 16L16 2l14 14" fill="none" stroke="#808080" strokeWidth="2.6" />
              </Icon>
            </NavButton>
          </NavGroup>
          <AddressBar>
            <PanelIcon />
            <Chevron ml={13} />
            <Crumb $ml={17}>控制面板</Crumb>
            <Chevron ml={16} />
            <Crumb $ml={17}>所有控制面板项</Crumb>
            <Spring />
            <Icon $w={22} $h={14} viewBox="0 0 22 14">
              <path d="M2 2l9 10 9-10" fill="none" stroke="#666" strokeWidth="2" />
            </Icon>
            <Icon $w={26} $h={28} $ml={57} viewBox="0 0 26 28">
              <path d="M13 5a10 10 0 1 0 10 10" transform="rotate(35 13 15)" fill="none" stroke="#666" strokeWidth="2" />
              <path d="M13 1l7 4-2 6" fill="none" stroke="#666" strokeWidth="2" />
            </Icon>
          </AddressBar>
          <SearchBox>
            <Icon $w={26} $h={26} viewBox="0 0 26 26">
              <circle cx="17" cy="9" r="6.5" fill="none" stroke="#777" strokeWidth="3.4" />
              <path d="M12 14L2 24" stroke="#777" strokeWidth="4" />
            </Icon>
          </SearchBox>
        </Toolbar>
        <Heading>
          <PageTitle>调整计算机的设置</PageTitle>
          <ViewMode>
            查看方式:
            <ViewLink>小图标</ViewLink>
            <Caret />
          </ViewMode>
        </Heading>
        <Grid>
          {items.map((it, i) =>
            it.icon ? (
              <Row key={i} $active={it.icon === 'power'}>
                <Icon viewBox="0 0 36 36">{icons[it.icon]}</Icon>
                <Label text={it.label} />
                {it.icon === 'power' && <RedBox />}
              </Row>
            ) : (
              <BlurredBar key={i}>
                {blurColors.map((c, j) => (
                  <BlurBlock key={j} $c={c} />
                ))}
              </BlurredBar>
            ),
          )}
        </Grid>
        <Arrow viewBox="1900 470 410 180">
          <path
            d="M1915 497L1986 485L1990 490L1987 505L2295 627L2291 637L1974 538L1970 550L1963 553L1958 550Z"
            fill="#f94c4a"
            stroke="#f94c4a"
            strokeWidth="3"
            strokeLinejoin="round"
          />
        </Arrow>
      </Window>
    </>
  );
}
